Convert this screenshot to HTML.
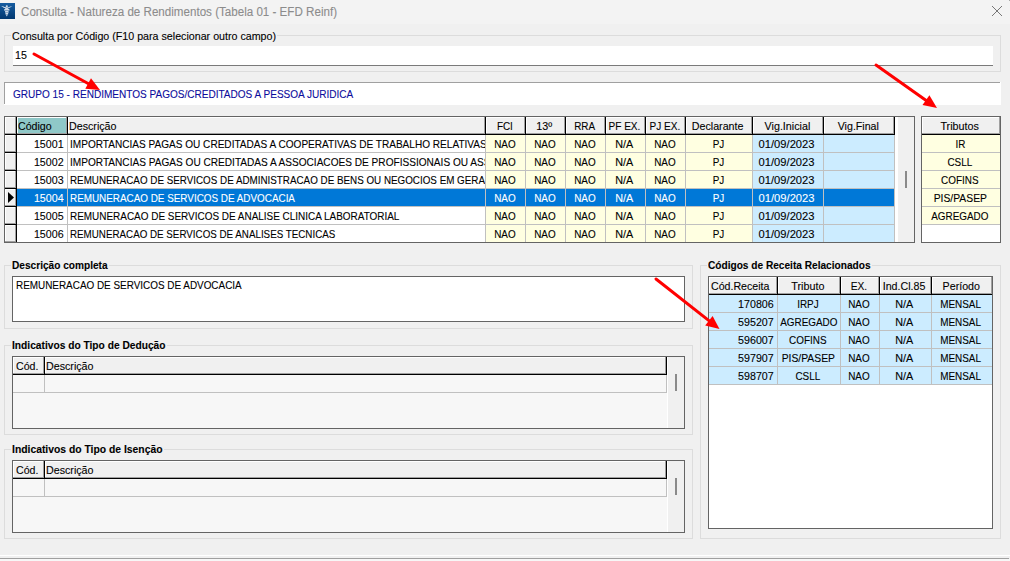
<!DOCTYPE html><html><head><meta charset="utf-8"><style>
html,body{margin:0;padding:0;width:1010px;height:561px;overflow:hidden;background:#f0f0f0}
body{position:relative;font-family:"Liberation Sans",sans-serif;font-size:11px}
div{position:absolute;box-sizing:border-box}
.t{line-height:14px;height:14px;white-space:nowrap;overflow:hidden}
.t span{display:inline-block;-webkit-text-stroke:0.1px currentColor}
</style></head><body>
<div style="left:0px;top:0px;width:1010px;height:561px;background:#f0f0f0;"></div>
<div style="left:0px;top:0px;width:1010px;height:24px;background:#f3f3f3;"></div>
<svg style="position:absolute;left:0;top:3px" width="15" height="16" viewBox="0 0 15 16">
<defs><linearGradient id="ig" x1="0" y1="0" x2="0" y2="1"><stop offset="0" stop-color="#165ca0"/><stop offset="1" stop-color="#023870"/></linearGradient></defs>
<rect width="15" height="16" fill="url(#ig)"/>
<g fill="#cfdbe8">
<circle cx="6.8" cy="3.3" r="1.1"/>
<path d="M1.2 3.0 L6 4.6 L6.2 5.6 L5.6 5.6 Z" />
<path d="M1.2 2.9 C3 3.4 4.8 3.9 6.3 4.7 L6.0 5.6 C4.3 5.0 2.6 4.0 1.2 2.9 Z"/>
<path d="M12.4 2.9 C10.6 3.4 8.8 3.9 7.3 4.7 L7.6 5.6 C9.3 5.0 11 4.0 12.4 2.9 Z"/>
<path d="M5.6 4.6 L8 4.6 L8.2 5.8 L9.6 6.4 L9.4 7.6 L8.4 7.9 L8.6 9.0 L8.2 10.6 L7.6 12 L6.8 13.6 L6.0 12 L5.4 10.6 L5.0 9.0 L5.2 7.9 L4.2 7.6 L4.0 6.4 L5.4 5.8 Z"/>
</g>
<g fill="#5f86b0"><rect x="4.6" y="7.2" width="4.4" height="0.7"/><rect x="5.0" y="9.2" width="3.6" height="0.6"/><rect x="5.4" y="11" width="2.8" height="0.6"/></g>
</svg>
<div class="t" style="left:21px;top:4.84px;width:380px;text-align:left;color:#8c8c8c;font-size:12px;"><span style="transform:scaleX(0.9669);transform-origin:0 0">Consulta - Natureza de Rendimentos (Tabela 01 - EFD Reinf)</span></div>
<div style="left:1009px;top:0px;width:1px;height:1px;background:#a8a8a8;"></div>
<svg style="position:absolute;left:991px;top:5px" width="12" height="12" viewBox="0 0 12 12"><path d="M1 1 L11 11 M11 1 L1 11" stroke="#777777" stroke-width="1"/></svg>
<div style="left:4px;top:35px;width:997px;height:1px;background:#dcdcdc;"></div>
<div style="left:4px;top:71px;width:997px;height:1px;background:#dcdcdc;"></div>
<div style="left:4px;top:35px;width:1px;height:37px;background:#dcdcdc;"></div>
<div style="left:1000px;top:35px;width:1px;height:37px;background:#dcdcdc;"></div>
<div style="left:11px;top:28px;width:266px;height:12px;background:#f0f0f0;"></div>
<div class="t" style="left:12px;top:29.19px;width:389px;text-align:left;color:#000;font-size:11px;"><span style="transform:scaleX(0.9703);transform-origin:0 0">Consulta por Código (F10 para selecionar outro campo)</span></div>
<div style="left:13px;top:46px;width:980px;height:19px;background:#ffffff;"></div>
<div style="left:13px;top:65px;width:980px;height:1px;background:#7a7a7a;"></div>
<div class="t" style="left:15px;top:48.19px;width:86px;text-align:left;color:#000;font-size:11px;"><span style="transform:scaleX(0.9700);transform-origin:0 0">15</span></div>
<div style="left:4px;top:82px;width:997px;height:23px;background:#ffffff;"></div>
<div style="left:4px;top:82px;width:996px;height:1px;background:#a0a0a0;"></div>
<div style="left:4px;top:82px;width:1px;height:22px;background:#a0a0a0;"></div>
<div class="t" style="left:13px;top:87.19px;width:588px;text-align:left;color:#0c0c9c;font-size:11px;"><span style="transform:scaleX(0.9127);transform-origin:0 0">GRUPO 15 - RENDIMENTOS PAGOS/CREDITADOS A PESSOA JURIDICA</span></div>
<div style="left:4px;top:116px;width:911px;height:127px;background:#f0f0f0;"></div>
<div style="left:5px;top:117px;width:11px;height:17px;background:#f0f0f0;"></div>
<div style="left:5px;top:117px;width:11px;height:1px;background:#ffffff;"></div>
<div style="left:5px;top:117px;width:1px;height:17px;background:#ffffff;"></div>
<div style="left:5px;top:133px;width:11px;height:1px;background:#a0a0a0;"></div>
<div style="left:15px;top:117px;width:1px;height:17px;background:#a0a0a0;"></div>
<div style="left:16px;top:117px;width:1px;height:18px;background:#000000;"></div>
<div style="left:5px;top:134px;width:12px;height:1px;background:#000000;"></div>
<div style="left:17px;top:117px;width:50px;height:17px;background:#f0f0f0;"></div>
<div style="left:17px;top:117px;width:50px;height:1px;background:#ffffff;"></div>
<div style="left:17px;top:117px;width:1px;height:17px;background:#ffffff;"></div>
<div style="left:17px;top:133px;width:50px;height:1px;background:#a0a0a0;"></div>
<div style="left:66px;top:117px;width:1px;height:17px;background:#a0a0a0;"></div>
<div style="left:18px;top:118px;width:48px;height:15px;background:#8fc8c8;"></div>
<div style="left:67px;top:117px;width:1px;height:18px;background:#000000;"></div>
<div style="left:17px;top:134px;width:51px;height:1px;background:#000000;"></div>
<div style="left:68px;top:117px;width:417px;height:17px;background:#f0f0f0;"></div>
<div style="left:68px;top:117px;width:417px;height:1px;background:#ffffff;"></div>
<div style="left:68px;top:117px;width:1px;height:17px;background:#ffffff;"></div>
<div style="left:68px;top:133px;width:417px;height:1px;background:#a0a0a0;"></div>
<div style="left:484px;top:117px;width:1px;height:17px;background:#a0a0a0;"></div>
<div style="left:485px;top:117px;width:1px;height:18px;background:#000000;"></div>
<div style="left:68px;top:134px;width:418px;height:1px;background:#000000;"></div>
<div style="left:486px;top:117px;width:39px;height:17px;background:#f0f0f0;"></div>
<div style="left:486px;top:117px;width:39px;height:1px;background:#ffffff;"></div>
<div style="left:486px;top:117px;width:1px;height:17px;background:#ffffff;"></div>
<div style="left:486px;top:133px;width:39px;height:1px;background:#a0a0a0;"></div>
<div style="left:524px;top:117px;width:1px;height:17px;background:#a0a0a0;"></div>
<div style="left:525px;top:117px;width:1px;height:18px;background:#000000;"></div>
<div style="left:486px;top:134px;width:40px;height:1px;background:#000000;"></div>
<div style="left:526px;top:117px;width:39px;height:17px;background:#f0f0f0;"></div>
<div style="left:526px;top:117px;width:39px;height:1px;background:#ffffff;"></div>
<div style="left:526px;top:117px;width:1px;height:17px;background:#ffffff;"></div>
<div style="left:526px;top:133px;width:39px;height:1px;background:#a0a0a0;"></div>
<div style="left:564px;top:117px;width:1px;height:17px;background:#a0a0a0;"></div>
<div style="left:565px;top:117px;width:1px;height:18px;background:#000000;"></div>
<div style="left:526px;top:134px;width:40px;height:1px;background:#000000;"></div>
<div style="left:566px;top:117px;width:39px;height:17px;background:#f0f0f0;"></div>
<div style="left:566px;top:117px;width:39px;height:1px;background:#ffffff;"></div>
<div style="left:566px;top:117px;width:1px;height:17px;background:#ffffff;"></div>
<div style="left:566px;top:133px;width:39px;height:1px;background:#a0a0a0;"></div>
<div style="left:604px;top:117px;width:1px;height:17px;background:#a0a0a0;"></div>
<div style="left:605px;top:117px;width:1px;height:18px;background:#000000;"></div>
<div style="left:566px;top:134px;width:40px;height:1px;background:#000000;"></div>
<div style="left:606px;top:117px;width:39px;height:17px;background:#f0f0f0;"></div>
<div style="left:606px;top:117px;width:39px;height:1px;background:#ffffff;"></div>
<div style="left:606px;top:117px;width:1px;height:17px;background:#ffffff;"></div>
<div style="left:606px;top:133px;width:39px;height:1px;background:#a0a0a0;"></div>
<div style="left:644px;top:117px;width:1px;height:17px;background:#a0a0a0;"></div>
<div style="left:645px;top:117px;width:1px;height:18px;background:#000000;"></div>
<div style="left:606px;top:134px;width:40px;height:1px;background:#000000;"></div>
<div style="left:646px;top:117px;width:39px;height:17px;background:#f0f0f0;"></div>
<div style="left:646px;top:117px;width:39px;height:1px;background:#ffffff;"></div>
<div style="left:646px;top:117px;width:1px;height:17px;background:#ffffff;"></div>
<div style="left:646px;top:133px;width:39px;height:1px;background:#a0a0a0;"></div>
<div style="left:684px;top:117px;width:1px;height:17px;background:#a0a0a0;"></div>
<div style="left:685px;top:117px;width:1px;height:18px;background:#000000;"></div>
<div style="left:646px;top:134px;width:40px;height:1px;background:#000000;"></div>
<div style="left:686px;top:117px;width:66px;height:17px;background:#f0f0f0;"></div>
<div style="left:686px;top:117px;width:66px;height:1px;background:#ffffff;"></div>
<div style="left:686px;top:117px;width:1px;height:17px;background:#ffffff;"></div>
<div style="left:686px;top:133px;width:66px;height:1px;background:#a0a0a0;"></div>
<div style="left:751px;top:117px;width:1px;height:17px;background:#a0a0a0;"></div>
<div style="left:752px;top:117px;width:1px;height:18px;background:#000000;"></div>
<div style="left:686px;top:134px;width:67px;height:1px;background:#000000;"></div>
<div style="left:753px;top:117px;width:70px;height:17px;background:#f0f0f0;"></div>
<div style="left:753px;top:117px;width:70px;height:1px;background:#ffffff;"></div>
<div style="left:753px;top:117px;width:1px;height:17px;background:#ffffff;"></div>
<div style="left:753px;top:133px;width:70px;height:1px;background:#a0a0a0;"></div>
<div style="left:822px;top:117px;width:1px;height:17px;background:#a0a0a0;"></div>
<div style="left:823px;top:117px;width:1px;height:18px;background:#000000;"></div>
<div style="left:753px;top:134px;width:71px;height:1px;background:#000000;"></div>
<div style="left:824px;top:117px;width:70px;height:17px;background:#f0f0f0;"></div>
<div style="left:824px;top:117px;width:70px;height:1px;background:#ffffff;"></div>
<div style="left:824px;top:117px;width:1px;height:17px;background:#ffffff;"></div>
<div style="left:824px;top:133px;width:70px;height:1px;background:#a0a0a0;"></div>
<div style="left:893px;top:117px;width:1px;height:17px;background:#a0a0a0;"></div>
<div style="left:894px;top:117px;width:1px;height:18px;background:#000000;"></div>
<div style="left:824px;top:134px;width:71px;height:1px;background:#000000;"></div>
<div style="left:5px;top:135px;width:11px;height:17px;background:#f0f0f0;"></div>
<div style="left:5px;top:135px;width:11px;height:1px;background:#ffffff;"></div>
<div style="left:5px;top:135px;width:1px;height:17px;background:#ffffff;"></div>
<div style="left:5px;top:151px;width:11px;height:1px;background:#a0a0a0;"></div>
<div style="left:15px;top:135px;width:1px;height:17px;background:#a0a0a0;"></div>
<div style="left:16px;top:135px;width:1px;height:18px;background:#000000;"></div>
<div style="left:5px;top:152px;width:12px;height:1px;background:#000000;"></div>
<div style="left:17px;top:135px;width:50px;height:17px;background:#ffffff;"></div>
<div style="left:67px;top:135px;width:1px;height:18px;background:#c0c0c0;"></div>
<div style="left:17px;top:152px;width:51px;height:1px;background:#c0c0c0;"></div>
<div style="left:68px;top:135px;width:417px;height:17px;background:#ffffff;"></div>
<div style="left:485px;top:135px;width:1px;height:18px;background:#c0c0c0;"></div>
<div style="left:68px;top:152px;width:418px;height:1px;background:#c0c0c0;"></div>
<div style="left:486px;top:135px;width:39px;height:17px;background:#ffffe1;"></div>
<div style="left:525px;top:135px;width:1px;height:18px;background:#c0c0c0;"></div>
<div style="left:486px;top:152px;width:40px;height:1px;background:#c0c0c0;"></div>
<div style="left:526px;top:135px;width:39px;height:17px;background:#ffffe1;"></div>
<div style="left:565px;top:135px;width:1px;height:18px;background:#c0c0c0;"></div>
<div style="left:526px;top:152px;width:40px;height:1px;background:#c0c0c0;"></div>
<div style="left:566px;top:135px;width:39px;height:17px;background:#ffffe1;"></div>
<div style="left:605px;top:135px;width:1px;height:18px;background:#c0c0c0;"></div>
<div style="left:566px;top:152px;width:40px;height:1px;background:#c0c0c0;"></div>
<div style="left:606px;top:135px;width:39px;height:17px;background:#ffffe1;"></div>
<div style="left:645px;top:135px;width:1px;height:18px;background:#c0c0c0;"></div>
<div style="left:606px;top:152px;width:40px;height:1px;background:#c0c0c0;"></div>
<div style="left:646px;top:135px;width:39px;height:17px;background:#ffffe1;"></div>
<div style="left:685px;top:135px;width:1px;height:18px;background:#c0c0c0;"></div>
<div style="left:646px;top:152px;width:40px;height:1px;background:#c0c0c0;"></div>
<div style="left:686px;top:135px;width:66px;height:17px;background:#ffffe1;"></div>
<div style="left:752px;top:135px;width:1px;height:18px;background:#c0c0c0;"></div>
<div style="left:686px;top:152px;width:67px;height:1px;background:#c0c0c0;"></div>
<div style="left:753px;top:135px;width:70px;height:17px;background:#ccecff;"></div>
<div style="left:823px;top:135px;width:1px;height:18px;background:#c0c0c0;"></div>
<div style="left:753px;top:152px;width:71px;height:1px;background:#c0c0c0;"></div>
<div style="left:824px;top:135px;width:70px;height:17px;background:#ccecff;"></div>
<div style="left:894px;top:135px;width:1px;height:18px;background:#c0c0c0;"></div>
<div style="left:824px;top:152px;width:71px;height:1px;background:#c0c0c0;"></div>
<div style="left:5px;top:153px;width:11px;height:17px;background:#f0f0f0;"></div>
<div style="left:5px;top:153px;width:11px;height:1px;background:#ffffff;"></div>
<div style="left:5px;top:153px;width:1px;height:17px;background:#ffffff;"></div>
<div style="left:5px;top:169px;width:11px;height:1px;background:#a0a0a0;"></div>
<div style="left:15px;top:153px;width:1px;height:17px;background:#a0a0a0;"></div>
<div style="left:16px;top:153px;width:1px;height:18px;background:#000000;"></div>
<div style="left:5px;top:170px;width:12px;height:1px;background:#000000;"></div>
<div style="left:17px;top:153px;width:50px;height:17px;background:#ffffff;"></div>
<div style="left:67px;top:153px;width:1px;height:18px;background:#c0c0c0;"></div>
<div style="left:17px;top:170px;width:51px;height:1px;background:#c0c0c0;"></div>
<div style="left:68px;top:153px;width:417px;height:17px;background:#ffffff;"></div>
<div style="left:485px;top:153px;width:1px;height:18px;background:#c0c0c0;"></div>
<div style="left:68px;top:170px;width:418px;height:1px;background:#c0c0c0;"></div>
<div style="left:486px;top:153px;width:39px;height:17px;background:#ffffe1;"></div>
<div style="left:525px;top:153px;width:1px;height:18px;background:#c0c0c0;"></div>
<div style="left:486px;top:170px;width:40px;height:1px;background:#c0c0c0;"></div>
<div style="left:526px;top:153px;width:39px;height:17px;background:#ffffe1;"></div>
<div style="left:565px;top:153px;width:1px;height:18px;background:#c0c0c0;"></div>
<div style="left:526px;top:170px;width:40px;height:1px;background:#c0c0c0;"></div>
<div style="left:566px;top:153px;width:39px;height:17px;background:#ffffe1;"></div>
<div style="left:605px;top:153px;width:1px;height:18px;background:#c0c0c0;"></div>
<div style="left:566px;top:170px;width:40px;height:1px;background:#c0c0c0;"></div>
<div style="left:606px;top:153px;width:39px;height:17px;background:#ffffe1;"></div>
<div style="left:645px;top:153px;width:1px;height:18px;background:#c0c0c0;"></div>
<div style="left:606px;top:170px;width:40px;height:1px;background:#c0c0c0;"></div>
<div style="left:646px;top:153px;width:39px;height:17px;background:#ffffe1;"></div>
<div style="left:685px;top:153px;width:1px;height:18px;background:#c0c0c0;"></div>
<div style="left:646px;top:170px;width:40px;height:1px;background:#c0c0c0;"></div>
<div style="left:686px;top:153px;width:66px;height:17px;background:#ffffe1;"></div>
<div style="left:752px;top:153px;width:1px;height:18px;background:#c0c0c0;"></div>
<div style="left:686px;top:170px;width:67px;height:1px;background:#c0c0c0;"></div>
<div style="left:753px;top:153px;width:70px;height:17px;background:#ccecff;"></div>
<div style="left:823px;top:153px;width:1px;height:18px;background:#c0c0c0;"></div>
<div style="left:753px;top:170px;width:71px;height:1px;background:#c0c0c0;"></div>
<div style="left:824px;top:153px;width:70px;height:17px;background:#ccecff;"></div>
<div style="left:894px;top:153px;width:1px;height:18px;background:#c0c0c0;"></div>
<div style="left:824px;top:170px;width:71px;height:1px;background:#c0c0c0;"></div>
<div style="left:5px;top:171px;width:11px;height:17px;background:#f0f0f0;"></div>
<div style="left:5px;top:171px;width:11px;height:1px;background:#ffffff;"></div>
<div style="left:5px;top:171px;width:1px;height:17px;background:#ffffff;"></div>
<div style="left:5px;top:187px;width:11px;height:1px;background:#a0a0a0;"></div>
<div style="left:15px;top:171px;width:1px;height:17px;background:#a0a0a0;"></div>
<div style="left:16px;top:171px;width:1px;height:18px;background:#000000;"></div>
<div style="left:5px;top:188px;width:12px;height:1px;background:#000000;"></div>
<div style="left:17px;top:171px;width:50px;height:17px;background:#ffffff;"></div>
<div style="left:67px;top:171px;width:1px;height:18px;background:#c0c0c0;"></div>
<div style="left:17px;top:188px;width:51px;height:1px;background:#c0c0c0;"></div>
<div style="left:68px;top:171px;width:417px;height:17px;background:#ffffff;"></div>
<div style="left:485px;top:171px;width:1px;height:18px;background:#c0c0c0;"></div>
<div style="left:68px;top:188px;width:418px;height:1px;background:#c0c0c0;"></div>
<div style="left:486px;top:171px;width:39px;height:17px;background:#ffffe1;"></div>
<div style="left:525px;top:171px;width:1px;height:18px;background:#c0c0c0;"></div>
<div style="left:486px;top:188px;width:40px;height:1px;background:#c0c0c0;"></div>
<div style="left:526px;top:171px;width:39px;height:17px;background:#ffffe1;"></div>
<div style="left:565px;top:171px;width:1px;height:18px;background:#c0c0c0;"></div>
<div style="left:526px;top:188px;width:40px;height:1px;background:#c0c0c0;"></div>
<div style="left:566px;top:171px;width:39px;height:17px;background:#ffffe1;"></div>
<div style="left:605px;top:171px;width:1px;height:18px;background:#c0c0c0;"></div>
<div style="left:566px;top:188px;width:40px;height:1px;background:#c0c0c0;"></div>
<div style="left:606px;top:171px;width:39px;height:17px;background:#ffffe1;"></div>
<div style="left:645px;top:171px;width:1px;height:18px;background:#c0c0c0;"></div>
<div style="left:606px;top:188px;width:40px;height:1px;background:#c0c0c0;"></div>
<div style="left:646px;top:171px;width:39px;height:17px;background:#ffffe1;"></div>
<div style="left:685px;top:171px;width:1px;height:18px;background:#c0c0c0;"></div>
<div style="left:646px;top:188px;width:40px;height:1px;background:#c0c0c0;"></div>
<div style="left:686px;top:171px;width:66px;height:17px;background:#ffffe1;"></div>
<div style="left:752px;top:171px;width:1px;height:18px;background:#c0c0c0;"></div>
<div style="left:686px;top:188px;width:67px;height:1px;background:#c0c0c0;"></div>
<div style="left:753px;top:171px;width:70px;height:17px;background:#ccecff;"></div>
<div style="left:823px;top:171px;width:1px;height:18px;background:#c0c0c0;"></div>
<div style="left:753px;top:188px;width:71px;height:1px;background:#c0c0c0;"></div>
<div style="left:824px;top:171px;width:70px;height:17px;background:#ccecff;"></div>
<div style="left:894px;top:171px;width:1px;height:18px;background:#c0c0c0;"></div>
<div style="left:824px;top:188px;width:71px;height:1px;background:#c0c0c0;"></div>
<div style="left:5px;top:189px;width:11px;height:17px;background:#f0f0f0;"></div>
<div style="left:5px;top:189px;width:11px;height:1px;background:#ffffff;"></div>
<div style="left:5px;top:189px;width:1px;height:17px;background:#ffffff;"></div>
<div style="left:5px;top:205px;width:11px;height:1px;background:#a0a0a0;"></div>
<div style="left:15px;top:189px;width:1px;height:17px;background:#a0a0a0;"></div>
<div style="left:16px;top:189px;width:1px;height:18px;background:#000000;"></div>
<div style="left:5px;top:206px;width:12px;height:1px;background:#000000;"></div>
<div style="left:17px;top:189px;width:50px;height:17px;background:#0078d7;"></div>
<div style="left:67px;top:189px;width:1px;height:18px;background:#c0c0c0;"></div>
<div style="left:17px;top:206px;width:51px;height:1px;background:#c0c0c0;"></div>
<div style="left:68px;top:189px;width:417px;height:17px;background:#0078d7;"></div>
<div style="left:485px;top:189px;width:1px;height:18px;background:#c0c0c0;"></div>
<div style="left:68px;top:206px;width:418px;height:1px;background:#c0c0c0;"></div>
<div style="left:486px;top:189px;width:39px;height:17px;background:#0078d7;"></div>
<div style="left:525px;top:189px;width:1px;height:18px;background:#c0c0c0;"></div>
<div style="left:486px;top:206px;width:40px;height:1px;background:#c0c0c0;"></div>
<div style="left:526px;top:189px;width:39px;height:17px;background:#0078d7;"></div>
<div style="left:565px;top:189px;width:1px;height:18px;background:#c0c0c0;"></div>
<div style="left:526px;top:206px;width:40px;height:1px;background:#c0c0c0;"></div>
<div style="left:566px;top:189px;width:39px;height:17px;background:#0078d7;"></div>
<div style="left:605px;top:189px;width:1px;height:18px;background:#c0c0c0;"></div>
<div style="left:566px;top:206px;width:40px;height:1px;background:#c0c0c0;"></div>
<div style="left:606px;top:189px;width:39px;height:17px;background:#0078d7;"></div>
<div style="left:645px;top:189px;width:1px;height:18px;background:#c0c0c0;"></div>
<div style="left:606px;top:206px;width:40px;height:1px;background:#c0c0c0;"></div>
<div style="left:646px;top:189px;width:39px;height:17px;background:#0078d7;"></div>
<div style="left:685px;top:189px;width:1px;height:18px;background:#c0c0c0;"></div>
<div style="left:646px;top:206px;width:40px;height:1px;background:#c0c0c0;"></div>
<div style="left:686px;top:189px;width:66px;height:17px;background:#0078d7;"></div>
<div style="left:752px;top:189px;width:1px;height:18px;background:#c0c0c0;"></div>
<div style="left:686px;top:206px;width:67px;height:1px;background:#c0c0c0;"></div>
<div style="left:753px;top:189px;width:70px;height:17px;background:#0078d7;"></div>
<div style="left:823px;top:189px;width:1px;height:18px;background:#c0c0c0;"></div>
<div style="left:753px;top:206px;width:71px;height:1px;background:#c0c0c0;"></div>
<div style="left:824px;top:189px;width:70px;height:17px;background:#0078d7;"></div>
<div style="left:894px;top:189px;width:1px;height:18px;background:#c0c0c0;"></div>
<div style="left:824px;top:206px;width:71px;height:1px;background:#c0c0c0;"></div>
<div style="left:5px;top:207px;width:11px;height:17px;background:#f0f0f0;"></div>
<div style="left:5px;top:207px;width:11px;height:1px;background:#ffffff;"></div>
<div style="left:5px;top:207px;width:1px;height:17px;background:#ffffff;"></div>
<div style="left:5px;top:223px;width:11px;height:1px;background:#a0a0a0;"></div>
<div style="left:15px;top:207px;width:1px;height:17px;background:#a0a0a0;"></div>
<div style="left:16px;top:207px;width:1px;height:18px;background:#000000;"></div>
<div style="left:5px;top:224px;width:12px;height:1px;background:#000000;"></div>
<div style="left:17px;top:207px;width:50px;height:17px;background:#ffffff;"></div>
<div style="left:67px;top:207px;width:1px;height:18px;background:#c0c0c0;"></div>
<div style="left:17px;top:224px;width:51px;height:1px;background:#c0c0c0;"></div>
<div style="left:68px;top:207px;width:417px;height:17px;background:#ffffff;"></div>
<div style="left:485px;top:207px;width:1px;height:18px;background:#c0c0c0;"></div>
<div style="left:68px;top:224px;width:418px;height:1px;background:#c0c0c0;"></div>
<div style="left:486px;top:207px;width:39px;height:17px;background:#ffffe1;"></div>
<div style="left:525px;top:207px;width:1px;height:18px;background:#c0c0c0;"></div>
<div style="left:486px;top:224px;width:40px;height:1px;background:#c0c0c0;"></div>
<div style="left:526px;top:207px;width:39px;height:17px;background:#ffffe1;"></div>
<div style="left:565px;top:207px;width:1px;height:18px;background:#c0c0c0;"></div>
<div style="left:526px;top:224px;width:40px;height:1px;background:#c0c0c0;"></div>
<div style="left:566px;top:207px;width:39px;height:17px;background:#ffffe1;"></div>
<div style="left:605px;top:207px;width:1px;height:18px;background:#c0c0c0;"></div>
<div style="left:566px;top:224px;width:40px;height:1px;background:#c0c0c0;"></div>
<div style="left:606px;top:207px;width:39px;height:17px;background:#ffffe1;"></div>
<div style="left:645px;top:207px;width:1px;height:18px;background:#c0c0c0;"></div>
<div style="left:606px;top:224px;width:40px;height:1px;background:#c0c0c0;"></div>
<div style="left:646px;top:207px;width:39px;height:17px;background:#ffffe1;"></div>
<div style="left:685px;top:207px;width:1px;height:18px;background:#c0c0c0;"></div>
<div style="left:646px;top:224px;width:40px;height:1px;background:#c0c0c0;"></div>
<div style="left:686px;top:207px;width:66px;height:17px;background:#ffffe1;"></div>
<div style="left:752px;top:207px;width:1px;height:18px;background:#c0c0c0;"></div>
<div style="left:686px;top:224px;width:67px;height:1px;background:#c0c0c0;"></div>
<div style="left:753px;top:207px;width:70px;height:17px;background:#ccecff;"></div>
<div style="left:823px;top:207px;width:1px;height:18px;background:#c0c0c0;"></div>
<div style="left:753px;top:224px;width:71px;height:1px;background:#c0c0c0;"></div>
<div style="left:824px;top:207px;width:70px;height:17px;background:#ccecff;"></div>
<div style="left:894px;top:207px;width:1px;height:18px;background:#c0c0c0;"></div>
<div style="left:824px;top:224px;width:71px;height:1px;background:#c0c0c0;"></div>
<div style="left:5px;top:225px;width:11px;height:17px;background:#f0f0f0;"></div>
<div style="left:5px;top:225px;width:11px;height:1px;background:#ffffff;"></div>
<div style="left:5px;top:225px;width:1px;height:17px;background:#ffffff;"></div>
<div style="left:5px;top:241px;width:11px;height:1px;background:#a0a0a0;"></div>
<div style="left:15px;top:225px;width:1px;height:17px;background:#a0a0a0;"></div>
<div style="left:16px;top:225px;width:1px;height:18px;background:#000000;"></div>
<div style="left:5px;top:242px;width:12px;height:1px;background:#000000;"></div>
<div style="left:17px;top:225px;width:50px;height:17px;background:#ffffff;"></div>
<div style="left:67px;top:225px;width:1px;height:18px;background:#c0c0c0;"></div>
<div style="left:17px;top:242px;width:51px;height:1px;background:#c0c0c0;"></div>
<div style="left:68px;top:225px;width:417px;height:17px;background:#ffffff;"></div>
<div style="left:485px;top:225px;width:1px;height:18px;background:#c0c0c0;"></div>
<div style="left:68px;top:242px;width:418px;height:1px;background:#c0c0c0;"></div>
<div style="left:486px;top:225px;width:39px;height:17px;background:#ffffe1;"></div>
<div style="left:525px;top:225px;width:1px;height:18px;background:#c0c0c0;"></div>
<div style="left:486px;top:242px;width:40px;height:1px;background:#c0c0c0;"></div>
<div style="left:526px;top:225px;width:39px;height:17px;background:#ffffe1;"></div>
<div style="left:565px;top:225px;width:1px;height:18px;background:#c0c0c0;"></div>
<div style="left:526px;top:242px;width:40px;height:1px;background:#c0c0c0;"></div>
<div style="left:566px;top:225px;width:39px;height:17px;background:#ffffe1;"></div>
<div style="left:605px;top:225px;width:1px;height:18px;background:#c0c0c0;"></div>
<div style="left:566px;top:242px;width:40px;height:1px;background:#c0c0c0;"></div>
<div style="left:606px;top:225px;width:39px;height:17px;background:#ffffe1;"></div>
<div style="left:645px;top:225px;width:1px;height:18px;background:#c0c0c0;"></div>
<div style="left:606px;top:242px;width:40px;height:1px;background:#c0c0c0;"></div>
<div style="left:646px;top:225px;width:39px;height:17px;background:#ffffe1;"></div>
<div style="left:685px;top:225px;width:1px;height:18px;background:#c0c0c0;"></div>
<div style="left:646px;top:242px;width:40px;height:1px;background:#c0c0c0;"></div>
<div style="left:686px;top:225px;width:66px;height:17px;background:#ffffe1;"></div>
<div style="left:752px;top:225px;width:1px;height:18px;background:#c0c0c0;"></div>
<div style="left:686px;top:242px;width:67px;height:1px;background:#c0c0c0;"></div>
<div style="left:753px;top:225px;width:70px;height:17px;background:#ccecff;"></div>
<div style="left:823px;top:225px;width:1px;height:18px;background:#c0c0c0;"></div>
<div style="left:753px;top:242px;width:71px;height:1px;background:#c0c0c0;"></div>
<div style="left:824px;top:225px;width:70px;height:17px;background:#ccecff;"></div>
<div style="left:894px;top:225px;width:1px;height:18px;background:#c0c0c0;"></div>
<div style="left:824px;top:242px;width:71px;height:1px;background:#c0c0c0;"></div>
<div style="left:4px;top:116px;width:911px;height:1px;background:#646464;"></div>
<div style="left:4px;top:242px;width:911px;height:1px;background:#646464;"></div>
<div style="left:4px;top:116px;width:1px;height:127px;background:#646464;"></div>
<div style="left:914px;top:116px;width:1px;height:127px;background:#646464;"></div>
<div style="left:895px;top:117px;width:19px;height:125px;background:#f0f0f0;"></div>
<div style="left:895px;top:117px;width:3px;height:125px;background:#ffffff;"></div>
<div style="left:905px;top:171px;width:2px;height:17px;background:#8a8a8a;"></div>
<div class="t" style="left:18px;top:119.19px;width:49px;text-align:left;color:#000;font-size:11px;"><span style="transform:scaleX(0.9656);transform-origin:0 0">Código</span></div>
<div class="t" style="left:69px;top:119.19px;width:416px;text-align:left;color:#000;font-size:11px;"><span style="transform:scaleX(0.9712);transform-origin:0 0">Descrição</span></div>
<div class="t" style="left:485px;top:119.19px;width:39px;text-align:center;color:#000;font-size:11px;"><span style="transform:scaleX(0.9000);transform-origin:50% 0">FCI</span></div>
<div class="t" style="left:525px;top:119.19px;width:39px;text-align:center;color:#000;font-size:11px;"><span style="transform:scaleX(0.9737);transform-origin:50% 0">13º</span></div>
<div class="t" style="left:565px;top:119.19px;width:39px;text-align:center;color:#000;font-size:11px;"><span style="transform:scaleX(0.9000);transform-origin:50% 0">RRA</span></div>
<div class="t" style="left:605px;top:119.19px;width:39px;text-align:center;color:#000;font-size:11px;"><span style="transform:scaleX(0.9140);transform-origin:50% 0">PF EX.</span></div>
<div class="t" style="left:645px;top:119.19px;width:39px;text-align:center;color:#000;font-size:11px;"><span style="transform:scaleX(0.9145);transform-origin:50% 0">PJ EX.</span></div>
<div class="t" style="left:685px;top:119.19px;width:66px;text-align:center;color:#000;font-size:11px;"><span style="transform:scaleX(0.9723);transform-origin:50% 0">Declarante</span></div>
<div class="t" style="left:752px;top:119.19px;width:70px;text-align:center;color:#000;font-size:11px;"><span style="transform:scaleX(0.9746);transform-origin:50% 0">Vig.Inicial</span></div>
<div class="t" style="left:823px;top:119.19px;width:70px;text-align:center;color:#000;font-size:11px;"><span style="transform:scaleX(0.9662);transform-origin:50% 0">Vig.Final</span></div>
<div class="t" style="left:17px;top:137.19px;width:50px;text-align:right;color:#000000;font-size:11px;padding-right:3px;box-sizing:border-box;"><span style="transform:scaleX(0.9700);transform-origin:100% 0">15001</span></div>
<div class="t" style="left:68px;top:137.19px;width:417px;text-align:left;color:#000000;font-size:11px;padding-left:2px;box-sizing:border-box;"><span style="transform:scaleX(0.9151);transform-origin:0 0">IMPORTANCIAS PAGAS OU CREDITADAS A COOPERATIVAS DE TRABALHO RELATIVAS A SERVICOS PESSOAIS</span></div>
<div class="t" style="left:485px;top:137.19px;width:39px;text-align:center;color:#000000;font-size:11px;"><span style="transform:scaleX(0.9000);transform-origin:50% 0">NAO</span></div>
<div class="t" style="left:525px;top:137.19px;width:39px;text-align:center;color:#000000;font-size:11px;"><span style="transform:scaleX(0.9000);transform-origin:50% 0">NAO</span></div>
<div class="t" style="left:565px;top:137.19px;width:39px;text-align:center;color:#000000;font-size:11px;"><span style="transform:scaleX(0.9000);transform-origin:50% 0">NAO</span></div>
<div class="t" style="left:605px;top:137.19px;width:39px;text-align:center;color:#000000;font-size:11px;"><span style="transform:scaleX(0.9817);transform-origin:50% 0">N/A</span></div>
<div class="t" style="left:645px;top:137.19px;width:39px;text-align:center;color:#000000;font-size:11px;"><span style="transform:scaleX(0.9000);transform-origin:50% 0">NAO</span></div>
<div class="t" style="left:685px;top:137.19px;width:66px;text-align:center;color:#000000;font-size:11px;"><span style="transform:scaleX(0.9000);transform-origin:50% 0">PJ</span></div>
<div class="t" style="left:752px;top:137.19px;width:70px;text-align:center;color:#000000;font-size:11px;"><span style="transform:scaleX(1.0166);transform-origin:50% 0">01/09/2023</span></div>
<div class="t" style="left:17px;top:155.19px;width:50px;text-align:right;color:#000000;font-size:11px;padding-right:3px;box-sizing:border-box;"><span style="transform:scaleX(0.9700);transform-origin:100% 0">15002</span></div>
<div class="t" style="left:68px;top:155.19px;width:417px;text-align:left;color:#000000;font-size:11px;padding-left:2px;box-sizing:border-box;"><span style="transform:scaleX(0.9177);transform-origin:0 0">IMPORTANCIAS PAGAS OU CREDITADAS A ASSOCIACOES DE PROFISSIONAIS OU ASSEMELHADAS</span></div>
<div class="t" style="left:485px;top:155.19px;width:39px;text-align:center;color:#000000;font-size:11px;"><span style="transform:scaleX(0.9000);transform-origin:50% 0">NAO</span></div>
<div class="t" style="left:525px;top:155.19px;width:39px;text-align:center;color:#000000;font-size:11px;"><span style="transform:scaleX(0.9000);transform-origin:50% 0">NAO</span></div>
<div class="t" style="left:565px;top:155.19px;width:39px;text-align:center;color:#000000;font-size:11px;"><span style="transform:scaleX(0.9000);transform-origin:50% 0">NAO</span></div>
<div class="t" style="left:605px;top:155.19px;width:39px;text-align:center;color:#000000;font-size:11px;"><span style="transform:scaleX(0.9817);transform-origin:50% 0">N/A</span></div>
<div class="t" style="left:645px;top:155.19px;width:39px;text-align:center;color:#000000;font-size:11px;"><span style="transform:scaleX(0.9000);transform-origin:50% 0">NAO</span></div>
<div class="t" style="left:685px;top:155.19px;width:66px;text-align:center;color:#000000;font-size:11px;"><span style="transform:scaleX(0.9000);transform-origin:50% 0">PJ</span></div>
<div class="t" style="left:752px;top:155.19px;width:70px;text-align:center;color:#000000;font-size:11px;"><span style="transform:scaleX(1.0166);transform-origin:50% 0">01/09/2023</span></div>
<div class="t" style="left:17px;top:173.19px;width:50px;text-align:right;color:#000000;font-size:11px;padding-right:3px;box-sizing:border-box;"><span style="transform:scaleX(0.9700);transform-origin:100% 0">15003</span></div>
<div class="t" style="left:68px;top:173.19px;width:417px;text-align:left;color:#000000;font-size:11px;padding-left:2px;box-sizing:border-box;"><span style="transform:scaleX(0.8937);transform-origin:0 0">REMUNERACAO DE SERVICOS DE ADMINISTRACAO DE BENS OU NEGOCIOS EM GERAL</span></div>
<div class="t" style="left:485px;top:173.19px;width:39px;text-align:center;color:#000000;font-size:11px;"><span style="transform:scaleX(0.9000);transform-origin:50% 0">NAO</span></div>
<div class="t" style="left:525px;top:173.19px;width:39px;text-align:center;color:#000000;font-size:11px;"><span style="transform:scaleX(0.9000);transform-origin:50% 0">NAO</span></div>
<div class="t" style="left:565px;top:173.19px;width:39px;text-align:center;color:#000000;font-size:11px;"><span style="transform:scaleX(0.9000);transform-origin:50% 0">NAO</span></div>
<div class="t" style="left:605px;top:173.19px;width:39px;text-align:center;color:#000000;font-size:11px;"><span style="transform:scaleX(0.9817);transform-origin:50% 0">N/A</span></div>
<div class="t" style="left:645px;top:173.19px;width:39px;text-align:center;color:#000000;font-size:11px;"><span style="transform:scaleX(0.9000);transform-origin:50% 0">NAO</span></div>
<div class="t" style="left:685px;top:173.19px;width:66px;text-align:center;color:#000000;font-size:11px;"><span style="transform:scaleX(0.9000);transform-origin:50% 0">PJ</span></div>
<div class="t" style="left:752px;top:173.19px;width:70px;text-align:center;color:#000000;font-size:11px;"><span style="transform:scaleX(1.0166);transform-origin:50% 0">01/09/2023</span></div>
<div class="t" style="left:17px;top:191.19px;width:50px;text-align:right;color:#ffffff;font-size:11px;padding-right:3px;box-sizing:border-box;"><span style="transform:scaleX(0.9700);transform-origin:100% 0">15004</span></div>
<div class="t" style="left:68px;top:191.19px;width:417px;text-align:left;color:#ffffff;font-size:11px;padding-left:2px;box-sizing:border-box;"><span style="transform:scaleX(0.8984);transform-origin:0 0">REMUNERACAO DE SERVICOS DE ADVOCACIA</span></div>
<div class="t" style="left:485px;top:191.19px;width:39px;text-align:center;color:#ffffff;font-size:11px;"><span style="transform:scaleX(0.9000);transform-origin:50% 0">NAO</span></div>
<div class="t" style="left:525px;top:191.19px;width:39px;text-align:center;color:#ffffff;font-size:11px;"><span style="transform:scaleX(0.9000);transform-origin:50% 0">NAO</span></div>
<div class="t" style="left:565px;top:191.19px;width:39px;text-align:center;color:#ffffff;font-size:11px;"><span style="transform:scaleX(0.9000);transform-origin:50% 0">NAO</span></div>
<div class="t" style="left:605px;top:191.19px;width:39px;text-align:center;color:#ffffff;font-size:11px;"><span style="transform:scaleX(0.9817);transform-origin:50% 0">N/A</span></div>
<div class="t" style="left:645px;top:191.19px;width:39px;text-align:center;color:#ffffff;font-size:11px;"><span style="transform:scaleX(0.9000);transform-origin:50% 0">NAO</span></div>
<div class="t" style="left:685px;top:191.19px;width:66px;text-align:center;color:#ffffff;font-size:11px;"><span style="transform:scaleX(0.9000);transform-origin:50% 0">PJ</span></div>
<div class="t" style="left:752px;top:191.19px;width:70px;text-align:center;color:#ffffff;font-size:11px;"><span style="transform:scaleX(1.0166);transform-origin:50% 0">01/09/2023</span></div>
<div class="t" style="left:17px;top:209.19px;width:50px;text-align:right;color:#000000;font-size:11px;padding-right:3px;box-sizing:border-box;"><span style="transform:scaleX(0.9700);transform-origin:100% 0">15005</span></div>
<div class="t" style="left:68px;top:209.19px;width:417px;text-align:left;color:#000000;font-size:11px;padding-left:2px;box-sizing:border-box;"><span style="transform:scaleX(0.9041);transform-origin:0 0">REMUNERACAO DE SERVICOS DE ANALISE CLINICA LABORATORIAL</span></div>
<div class="t" style="left:485px;top:209.19px;width:39px;text-align:center;color:#000000;font-size:11px;"><span style="transform:scaleX(0.9000);transform-origin:50% 0">NAO</span></div>
<div class="t" style="left:525px;top:209.19px;width:39px;text-align:center;color:#000000;font-size:11px;"><span style="transform:scaleX(0.9000);transform-origin:50% 0">NAO</span></div>
<div class="t" style="left:565px;top:209.19px;width:39px;text-align:center;color:#000000;font-size:11px;"><span style="transform:scaleX(0.9000);transform-origin:50% 0">NAO</span></div>
<div class="t" style="left:605px;top:209.19px;width:39px;text-align:center;color:#000000;font-size:11px;"><span style="transform:scaleX(0.9817);transform-origin:50% 0">N/A</span></div>
<div class="t" style="left:645px;top:209.19px;width:39px;text-align:center;color:#000000;font-size:11px;"><span style="transform:scaleX(0.9000);transform-origin:50% 0">NAO</span></div>
<div class="t" style="left:685px;top:209.19px;width:66px;text-align:center;color:#000000;font-size:11px;"><span style="transform:scaleX(0.9000);transform-origin:50% 0">PJ</span></div>
<div class="t" style="left:752px;top:209.19px;width:70px;text-align:center;color:#000000;font-size:11px;"><span style="transform:scaleX(1.0166);transform-origin:50% 0">01/09/2023</span></div>
<div class="t" style="left:17px;top:227.19px;width:50px;text-align:right;color:#000000;font-size:11px;padding-right:3px;box-sizing:border-box;"><span style="transform:scaleX(0.9700);transform-origin:100% 0">15006</span></div>
<div class="t" style="left:68px;top:227.19px;width:417px;text-align:left;color:#000000;font-size:11px;padding-left:2px;box-sizing:border-box;"><span style="transform:scaleX(0.8905);transform-origin:0 0">REMUNERACAO DE SERVICOS DE ANALISES TECNICAS</span></div>
<div class="t" style="left:485px;top:227.19px;width:39px;text-align:center;color:#000000;font-size:11px;"><span style="transform:scaleX(0.9000);transform-origin:50% 0">NAO</span></div>
<div class="t" style="left:525px;top:227.19px;width:39px;text-align:center;color:#000000;font-size:11px;"><span style="transform:scaleX(0.9000);transform-origin:50% 0">NAO</span></div>
<div class="t" style="left:565px;top:227.19px;width:39px;text-align:center;color:#000000;font-size:11px;"><span style="transform:scaleX(0.9000);transform-origin:50% 0">NAO</span></div>
<div class="t" style="left:605px;top:227.19px;width:39px;text-align:center;color:#000000;font-size:11px;"><span style="transform:scaleX(0.9817);transform-origin:50% 0">N/A</span></div>
<div class="t" style="left:645px;top:227.19px;width:39px;text-align:center;color:#000000;font-size:11px;"><span style="transform:scaleX(0.9000);transform-origin:50% 0">NAO</span></div>
<div class="t" style="left:685px;top:227.19px;width:66px;text-align:center;color:#000000;font-size:11px;"><span style="transform:scaleX(0.9000);transform-origin:50% 0">PJ</span></div>
<div class="t" style="left:752px;top:227.19px;width:70px;text-align:center;color:#000000;font-size:11px;"><span style="transform:scaleX(1.0166);transform-origin:50% 0">01/09/2023</span></div>
<svg style="position:absolute;left:8px;top:192px" width="7" height="12" viewBox="0 0 7 12"><path d="M0 0 L6 5.5 L0 11 Z" fill="#000"/></svg>
<div style="left:921px;top:116px;width:80px;height:127px;background:#ffffff;"></div>
<div style="left:921px;top:116px;width:80px;height:127px;background:#ffffff;"></div>
<div style="left:922px;top:117px;width:78px;height:17px;background:#f0f0f0;"></div>
<div style="left:922px;top:117px;width:78px;height:1px;background:#ffffff;"></div>
<div style="left:922px;top:117px;width:1px;height:17px;background:#ffffff;"></div>
<div style="left:922px;top:133px;width:78px;height:1px;background:#a0a0a0;"></div>
<div style="left:999px;top:117px;width:1px;height:17px;background:#a0a0a0;"></div>
<div style="left:1000px;top:117px;width:1px;height:18px;background:#000000;"></div>
<div style="left:922px;top:134px;width:79px;height:1px;background:#000000;"></div>
<div style="left:922px;top:135px;width:78px;height:17px;background:#ffffe1;"></div>
<div style="left:1000px;top:135px;width:1px;height:18px;background:#c0c0c0;"></div>
<div style="left:922px;top:152px;width:79px;height:1px;background:#c0c0c0;"></div>
<div style="left:922px;top:153px;width:78px;height:17px;background:#ffffe1;"></div>
<div style="left:1000px;top:153px;width:1px;height:18px;background:#c0c0c0;"></div>
<div style="left:922px;top:170px;width:79px;height:1px;background:#c0c0c0;"></div>
<div style="left:922px;top:171px;width:78px;height:17px;background:#ffffe1;"></div>
<div style="left:1000px;top:171px;width:1px;height:18px;background:#c0c0c0;"></div>
<div style="left:922px;top:188px;width:79px;height:1px;background:#c0c0c0;"></div>
<div style="left:922px;top:189px;width:78px;height:17px;background:#ffffe1;"></div>
<div style="left:1000px;top:189px;width:1px;height:18px;background:#c0c0c0;"></div>
<div style="left:922px;top:206px;width:79px;height:1px;background:#c0c0c0;"></div>
<div style="left:922px;top:207px;width:78px;height:17px;background:#ffffe1;"></div>
<div style="left:1000px;top:207px;width:1px;height:18px;background:#c0c0c0;"></div>
<div style="left:922px;top:224px;width:79px;height:1px;background:#c0c0c0;"></div>
<div style="left:921px;top:116px;width:80px;height:1px;background:#646464;"></div>
<div style="left:921px;top:242px;width:80px;height:1px;background:#646464;"></div>
<div style="left:921px;top:116px;width:1px;height:127px;background:#646464;"></div>
<div style="left:1000px;top:116px;width:1px;height:127px;background:#646464;"></div>
<div class="t" style="left:921px;top:119.19px;width:78px;text-align:center;color:#000;font-size:11px;"><span style="transform:scaleX(0.9807);transform-origin:50% 0">Tributos</span></div>
<div class="t" style="left:921px;top:137.19px;width:78px;text-align:center;color:#000;font-size:11px;"><span style="transform:scaleX(0.9000);transform-origin:50% 0">IR</span></div>
<div class="t" style="left:921px;top:155.19px;width:78px;text-align:center;color:#000;font-size:11px;"><span style="transform:scaleX(0.9000);transform-origin:50% 0">CSLL</span></div>
<div class="t" style="left:921px;top:173.19px;width:78px;text-align:center;color:#000;font-size:11px;"><span style="transform:scaleX(0.9000);transform-origin:50% 0">COFINS</span></div>
<div class="t" style="left:921px;top:191.19px;width:78px;text-align:center;color:#000;font-size:11px;"><span style="transform:scaleX(0.9394);transform-origin:50% 0">PIS/PASEP</span></div>
<div class="t" style="left:921px;top:209.19px;width:78px;text-align:center;color:#000;font-size:11px;"><span style="transform:scaleX(0.9000);transform-origin:50% 0">AGREGADO</span></div>
<div style="left:4px;top:265px;width:689px;height:1px;background:#dcdcdc;"></div>
<div style="left:4px;top:328px;width:689px;height:1px;background:#dcdcdc;"></div>
<div style="left:4px;top:265px;width:1px;height:64px;background:#dcdcdc;"></div>
<div style="left:692px;top:265px;width:1px;height:64px;background:#dcdcdc;"></div>
<div style="left:11px;top:258px;width:98px;height:12px;background:#f0f0f0;"></div>
<div class="t" style="left:12px;top:258.19px;width:289px;text-align:left;color:#000;font-size:11px;font-weight:bold;"><span style="transform:scaleX(0.9200);transform-origin:0 0">Descrição completa</span></div>
<div style="left:12px;top:276px;width:673px;height:46px;background:#ffffff;"></div>
<div style="left:12px;top:276px;width:673px;height:1px;background:#646464;"></div>
<div style="left:12px;top:321px;width:673px;height:1px;background:#646464;"></div>
<div style="left:12px;top:276px;width:1px;height:46px;background:#646464;"></div>
<div style="left:684px;top:276px;width:1px;height:46px;background:#646464;"></div>
<div class="t" style="left:16px;top:278.19px;width:585px;text-align:left;color:#000;font-size:11px;"><span style="transform:scaleX(0.9012);transform-origin:0 0">REMUNERACAO DE SERVICOS DE ADVOCACIA</span></div>
<div style="left:700px;top:265px;width:301px;height:1px;background:#dcdcdc;"></div>
<div style="left:700px;top:538px;width:301px;height:1px;background:#dcdcdc;"></div>
<div style="left:700px;top:265px;width:1px;height:274px;background:#dcdcdc;"></div>
<div style="left:1000px;top:265px;width:1px;height:274px;background:#dcdcdc;"></div>
<div style="left:707px;top:258px;width:165px;height:12px;background:#f0f0f0;"></div>
<div class="t" style="left:708px;top:258.19px;width:193px;text-align:left;color:#000;font-size:11px;font-weight:bold;"><span style="transform:scaleX(0.9200);transform-origin:0 0">Códigos de Receita Relacionados</span></div>
<div style="left:708px;top:276px;width:285px;height:253px;background:#ffffff;"></div>
<div style="left:709px;top:277px;width:68px;height:17px;background:#f0f0f0;"></div>
<div style="left:709px;top:277px;width:68px;height:1px;background:#ffffff;"></div>
<div style="left:709px;top:277px;width:1px;height:17px;background:#ffffff;"></div>
<div style="left:709px;top:293px;width:68px;height:1px;background:#a0a0a0;"></div>
<div style="left:776px;top:277px;width:1px;height:17px;background:#a0a0a0;"></div>
<div style="left:777px;top:277px;width:1px;height:18px;background:#000000;"></div>
<div style="left:709px;top:294px;width:69px;height:1px;background:#000000;"></div>
<div style="left:778px;top:277px;width:62px;height:17px;background:#f0f0f0;"></div>
<div style="left:778px;top:277px;width:62px;height:1px;background:#ffffff;"></div>
<div style="left:778px;top:277px;width:1px;height:17px;background:#ffffff;"></div>
<div style="left:778px;top:293px;width:62px;height:1px;background:#a0a0a0;"></div>
<div style="left:839px;top:277px;width:1px;height:17px;background:#a0a0a0;"></div>
<div style="left:840px;top:277px;width:1px;height:18px;background:#000000;"></div>
<div style="left:778px;top:294px;width:63px;height:1px;background:#000000;"></div>
<div style="left:841px;top:277px;width:38px;height:17px;background:#f0f0f0;"></div>
<div style="left:841px;top:277px;width:38px;height:1px;background:#ffffff;"></div>
<div style="left:841px;top:277px;width:1px;height:17px;background:#ffffff;"></div>
<div style="left:841px;top:293px;width:38px;height:1px;background:#a0a0a0;"></div>
<div style="left:878px;top:277px;width:1px;height:17px;background:#a0a0a0;"></div>
<div style="left:879px;top:277px;width:1px;height:18px;background:#000000;"></div>
<div style="left:841px;top:294px;width:39px;height:1px;background:#000000;"></div>
<div style="left:880px;top:277px;width:51px;height:17px;background:#f0f0f0;"></div>
<div style="left:880px;top:277px;width:51px;height:1px;background:#ffffff;"></div>
<div style="left:880px;top:277px;width:1px;height:17px;background:#ffffff;"></div>
<div style="left:880px;top:293px;width:51px;height:1px;background:#a0a0a0;"></div>
<div style="left:930px;top:277px;width:1px;height:17px;background:#a0a0a0;"></div>
<div style="left:931px;top:277px;width:1px;height:18px;background:#000000;"></div>
<div style="left:880px;top:294px;width:52px;height:1px;background:#000000;"></div>
<div style="left:932px;top:277px;width:60px;height:17px;background:#f0f0f0;"></div>
<div style="left:932px;top:277px;width:60px;height:1px;background:#ffffff;"></div>
<div style="left:932px;top:277px;width:1px;height:17px;background:#ffffff;"></div>
<div style="left:932px;top:293px;width:60px;height:1px;background:#a0a0a0;"></div>
<div style="left:991px;top:277px;width:1px;height:17px;background:#a0a0a0;"></div>
<div style="left:992px;top:277px;width:1px;height:18px;background:#000000;"></div>
<div style="left:932px;top:294px;width:61px;height:1px;background:#000000;"></div>
<div style="left:709px;top:295px;width:68px;height:17px;background:#ccecff;"></div>
<div style="left:777px;top:295px;width:1px;height:18px;background:#c0c0c0;"></div>
<div style="left:709px;top:312px;width:69px;height:1px;background:#c0c0c0;"></div>
<div style="left:778px;top:295px;width:62px;height:17px;background:#ccecff;"></div>
<div style="left:840px;top:295px;width:1px;height:18px;background:#c0c0c0;"></div>
<div style="left:778px;top:312px;width:63px;height:1px;background:#c0c0c0;"></div>
<div style="left:841px;top:295px;width:38px;height:17px;background:#ccecff;"></div>
<div style="left:879px;top:295px;width:1px;height:18px;background:#c0c0c0;"></div>
<div style="left:841px;top:312px;width:39px;height:1px;background:#c0c0c0;"></div>
<div style="left:880px;top:295px;width:51px;height:17px;background:#ccecff;"></div>
<div style="left:931px;top:295px;width:1px;height:18px;background:#c0c0c0;"></div>
<div style="left:880px;top:312px;width:52px;height:1px;background:#c0c0c0;"></div>
<div style="left:932px;top:295px;width:60px;height:17px;background:#ccecff;"></div>
<div style="left:992px;top:295px;width:1px;height:18px;background:#c0c0c0;"></div>
<div style="left:932px;top:312px;width:61px;height:1px;background:#c0c0c0;"></div>
<div style="left:709px;top:313px;width:68px;height:17px;background:#ccecff;"></div>
<div style="left:777px;top:313px;width:1px;height:18px;background:#c0c0c0;"></div>
<div style="left:709px;top:330px;width:69px;height:1px;background:#c0c0c0;"></div>
<div style="left:778px;top:313px;width:62px;height:17px;background:#ccecff;"></div>
<div style="left:840px;top:313px;width:1px;height:18px;background:#c0c0c0;"></div>
<div style="left:778px;top:330px;width:63px;height:1px;background:#c0c0c0;"></div>
<div style="left:841px;top:313px;width:38px;height:17px;background:#ccecff;"></div>
<div style="left:879px;top:313px;width:1px;height:18px;background:#c0c0c0;"></div>
<div style="left:841px;top:330px;width:39px;height:1px;background:#c0c0c0;"></div>
<div style="left:880px;top:313px;width:51px;height:17px;background:#ccecff;"></div>
<div style="left:931px;top:313px;width:1px;height:18px;background:#c0c0c0;"></div>
<div style="left:880px;top:330px;width:52px;height:1px;background:#c0c0c0;"></div>
<div style="left:932px;top:313px;width:60px;height:17px;background:#ccecff;"></div>
<div style="left:992px;top:313px;width:1px;height:18px;background:#c0c0c0;"></div>
<div style="left:932px;top:330px;width:61px;height:1px;background:#c0c0c0;"></div>
<div style="left:709px;top:331px;width:68px;height:17px;background:#ccecff;"></div>
<div style="left:777px;top:331px;width:1px;height:18px;background:#c0c0c0;"></div>
<div style="left:709px;top:348px;width:69px;height:1px;background:#c0c0c0;"></div>
<div style="left:778px;top:331px;width:62px;height:17px;background:#ccecff;"></div>
<div style="left:840px;top:331px;width:1px;height:18px;background:#c0c0c0;"></div>
<div style="left:778px;top:348px;width:63px;height:1px;background:#c0c0c0;"></div>
<div style="left:841px;top:331px;width:38px;height:17px;background:#ccecff;"></div>
<div style="left:879px;top:331px;width:1px;height:18px;background:#c0c0c0;"></div>
<div style="left:841px;top:348px;width:39px;height:1px;background:#c0c0c0;"></div>
<div style="left:880px;top:331px;width:51px;height:17px;background:#ccecff;"></div>
<div style="left:931px;top:331px;width:1px;height:18px;background:#c0c0c0;"></div>
<div style="left:880px;top:348px;width:52px;height:1px;background:#c0c0c0;"></div>
<div style="left:932px;top:331px;width:60px;height:17px;background:#ccecff;"></div>
<div style="left:992px;top:331px;width:1px;height:18px;background:#c0c0c0;"></div>
<div style="left:932px;top:348px;width:61px;height:1px;background:#c0c0c0;"></div>
<div style="left:709px;top:349px;width:68px;height:17px;background:#ccecff;"></div>
<div style="left:777px;top:349px;width:1px;height:18px;background:#c0c0c0;"></div>
<div style="left:709px;top:366px;width:69px;height:1px;background:#c0c0c0;"></div>
<div style="left:778px;top:349px;width:62px;height:17px;background:#ccecff;"></div>
<div style="left:840px;top:349px;width:1px;height:18px;background:#c0c0c0;"></div>
<div style="left:778px;top:366px;width:63px;height:1px;background:#c0c0c0;"></div>
<div style="left:841px;top:349px;width:38px;height:17px;background:#ccecff;"></div>
<div style="left:879px;top:349px;width:1px;height:18px;background:#c0c0c0;"></div>
<div style="left:841px;top:366px;width:39px;height:1px;background:#c0c0c0;"></div>
<div style="left:880px;top:349px;width:51px;height:17px;background:#ccecff;"></div>
<div style="left:931px;top:349px;width:1px;height:18px;background:#c0c0c0;"></div>
<div style="left:880px;top:366px;width:52px;height:1px;background:#c0c0c0;"></div>
<div style="left:932px;top:349px;width:60px;height:17px;background:#ccecff;"></div>
<div style="left:992px;top:349px;width:1px;height:18px;background:#c0c0c0;"></div>
<div style="left:932px;top:366px;width:61px;height:1px;background:#c0c0c0;"></div>
<div style="left:709px;top:367px;width:68px;height:17px;background:#ccecff;"></div>
<div style="left:777px;top:367px;width:1px;height:18px;background:#c0c0c0;"></div>
<div style="left:709px;top:384px;width:69px;height:1px;background:#c0c0c0;"></div>
<div style="left:778px;top:367px;width:62px;height:17px;background:#ccecff;"></div>
<div style="left:840px;top:367px;width:1px;height:18px;background:#c0c0c0;"></div>
<div style="left:778px;top:384px;width:63px;height:1px;background:#c0c0c0;"></div>
<div style="left:841px;top:367px;width:38px;height:17px;background:#ccecff;"></div>
<div style="left:879px;top:367px;width:1px;height:18px;background:#c0c0c0;"></div>
<div style="left:841px;top:384px;width:39px;height:1px;background:#c0c0c0;"></div>
<div style="left:880px;top:367px;width:51px;height:17px;background:#ccecff;"></div>
<div style="left:931px;top:367px;width:1px;height:18px;background:#c0c0c0;"></div>
<div style="left:880px;top:384px;width:52px;height:1px;background:#c0c0c0;"></div>
<div style="left:932px;top:367px;width:60px;height:17px;background:#ccecff;"></div>
<div style="left:992px;top:367px;width:1px;height:18px;background:#c0c0c0;"></div>
<div style="left:932px;top:384px;width:61px;height:1px;background:#c0c0c0;"></div>
<div style="left:708px;top:276px;width:285px;height:1px;background:#646464;"></div>
<div style="left:708px;top:528px;width:285px;height:1px;background:#646464;"></div>
<div style="left:708px;top:276px;width:1px;height:253px;background:#646464;"></div>
<div style="left:992px;top:276px;width:1px;height:253px;background:#646464;"></div>
<div class="t" style="left:709px;top:279.19px;width:68px;text-align:left;color:#000;font-size:11px;padding-left:2px;box-sizing:border-box;"><span style="transform:scaleX(0.9660);transform-origin:0 0">Cód.Receita</span></div>
<div class="t" style="left:777px;top:279.19px;width:62px;text-align:center;color:#000;font-size:11px;"><span style="transform:scaleX(0.9800);transform-origin:50% 0">Tributo</span></div>
<div class="t" style="left:840px;top:279.19px;width:38px;text-align:center;color:#000;font-size:11px;"><span style="transform:scaleX(0.9259);transform-origin:50% 0">EX.</span></div>
<div class="t" style="left:879px;top:279.19px;width:51px;text-align:center;color:#000;font-size:11px;"><span style="transform:scaleX(0.9686);transform-origin:50% 0">Ind.Cl.85</span></div>
<div class="t" style="left:931px;top:279.19px;width:60px;text-align:center;color:#000;font-size:11px;"><span style="transform:scaleX(0.9688);transform-origin:50% 0">Período</span></div>
<div class="t" style="left:709px;top:297.19px;width:68px;text-align:right;color:#000;font-size:11px;padding-right:3px;box-sizing:border-box;"><span style="transform:scaleX(0.9700);transform-origin:100% 0">170806</span></div>
<div class="t" style="left:777px;top:297.19px;width:62px;text-align:center;color:#000;font-size:11px;"><span style="transform:scaleX(0.9000);transform-origin:50% 0">IRPJ</span></div>
<div class="t" style="left:840px;top:297.19px;width:38px;text-align:center;color:#000;font-size:11px;"><span style="transform:scaleX(0.9000);transform-origin:50% 0">NAO</span></div>
<div class="t" style="left:879px;top:297.19px;width:51px;text-align:center;color:#000;font-size:11px;"><span style="transform:scaleX(0.9817);transform-origin:50% 0">N/A</span></div>
<div class="t" style="left:931px;top:297.19px;width:60px;text-align:center;color:#000;font-size:11px;"><span style="transform:scaleX(0.9000);transform-origin:50% 0">MENSAL</span></div>
<div class="t" style="left:709px;top:315.19px;width:68px;text-align:right;color:#000;font-size:11px;padding-right:3px;box-sizing:border-box;"><span style="transform:scaleX(0.9700);transform-origin:100% 0">595207</span></div>
<div class="t" style="left:777px;top:315.19px;width:62px;text-align:center;color:#000;font-size:11px;"><span style="transform:scaleX(0.9000);transform-origin:50% 0">AGREGADO</span></div>
<div class="t" style="left:840px;top:315.19px;width:38px;text-align:center;color:#000;font-size:11px;"><span style="transform:scaleX(0.9000);transform-origin:50% 0">NAO</span></div>
<div class="t" style="left:879px;top:315.19px;width:51px;text-align:center;color:#000;font-size:11px;"><span style="transform:scaleX(0.9817);transform-origin:50% 0">N/A</span></div>
<div class="t" style="left:931px;top:315.19px;width:60px;text-align:center;color:#000;font-size:11px;"><span style="transform:scaleX(0.9000);transform-origin:50% 0">MENSAL</span></div>
<div class="t" style="left:709px;top:333.19px;width:68px;text-align:right;color:#000;font-size:11px;padding-right:3px;box-sizing:border-box;"><span style="transform:scaleX(0.9700);transform-origin:100% 0">596007</span></div>
<div class="t" style="left:777px;top:333.19px;width:62px;text-align:center;color:#000;font-size:11px;"><span style="transform:scaleX(0.9000);transform-origin:50% 0">COFINS</span></div>
<div class="t" style="left:840px;top:333.19px;width:38px;text-align:center;color:#000;font-size:11px;"><span style="transform:scaleX(0.9000);transform-origin:50% 0">NAO</span></div>
<div class="t" style="left:879px;top:333.19px;width:51px;text-align:center;color:#000;font-size:11px;"><span style="transform:scaleX(0.9817);transform-origin:50% 0">N/A</span></div>
<div class="t" style="left:931px;top:333.19px;width:60px;text-align:center;color:#000;font-size:11px;"><span style="transform:scaleX(0.9000);transform-origin:50% 0">MENSAL</span></div>
<div class="t" style="left:709px;top:351.19px;width:68px;text-align:right;color:#000;font-size:11px;padding-right:3px;box-sizing:border-box;"><span style="transform:scaleX(0.9700);transform-origin:100% 0">597907</span></div>
<div class="t" style="left:777px;top:351.19px;width:62px;text-align:center;color:#000;font-size:11px;"><span style="transform:scaleX(0.9394);transform-origin:50% 0">PIS/PASEP</span></div>
<div class="t" style="left:840px;top:351.19px;width:38px;text-align:center;color:#000;font-size:11px;"><span style="transform:scaleX(0.9000);transform-origin:50% 0">NAO</span></div>
<div class="t" style="left:879px;top:351.19px;width:51px;text-align:center;color:#000;font-size:11px;"><span style="transform:scaleX(0.9817);transform-origin:50% 0">N/A</span></div>
<div class="t" style="left:931px;top:351.19px;width:60px;text-align:center;color:#000;font-size:11px;"><span style="transform:scaleX(0.9000);transform-origin:50% 0">MENSAL</span></div>
<div class="t" style="left:709px;top:369.19px;width:68px;text-align:right;color:#000;font-size:11px;padding-right:3px;box-sizing:border-box;"><span style="transform:scaleX(0.9700);transform-origin:100% 0">598707</span></div>
<div class="t" style="left:777px;top:369.19px;width:62px;text-align:center;color:#000;font-size:11px;"><span style="transform:scaleX(0.9000);transform-origin:50% 0">CSLL</span></div>
<div class="t" style="left:840px;top:369.19px;width:38px;text-align:center;color:#000;font-size:11px;"><span style="transform:scaleX(0.9000);transform-origin:50% 0">NAO</span></div>
<div class="t" style="left:879px;top:369.19px;width:51px;text-align:center;color:#000;font-size:11px;"><span style="transform:scaleX(0.9817);transform-origin:50% 0">N/A</span></div>
<div class="t" style="left:931px;top:369.19px;width:60px;text-align:center;color:#000;font-size:11px;"><span style="transform:scaleX(0.9000);transform-origin:50% 0">MENSAL</span></div>
<div style="left:4px;top:345px;width:689px;height:1px;background:#dcdcdc;"></div>
<div style="left:4px;top:434px;width:689px;height:1px;background:#dcdcdc;"></div>
<div style="left:4px;top:345px;width:1px;height:90px;background:#dcdcdc;"></div>
<div style="left:692px;top:345px;width:1px;height:90px;background:#dcdcdc;"></div>
<div style="left:11px;top:338px;width:156px;height:12px;background:#f0f0f0;"></div>
<div class="t" style="left:12px;top:338.19px;width:389px;text-align:left;color:#000;font-size:11px;font-weight:bold;"><span style="transform:scaleX(0.9279);transform-origin:0 0">Indicativos do Tipo de Dedução</span></div>
<div style="left:12px;top:356px;width:673px;height:73px;background:#f7f7f7;"></div>
<div style="left:13px;top:357px;width:31px;height:17px;background:#f0f0f0;"></div>
<div style="left:13px;top:357px;width:31px;height:1px;background:#ffffff;"></div>
<div style="left:13px;top:357px;width:1px;height:17px;background:#ffffff;"></div>
<div style="left:13px;top:373px;width:31px;height:1px;background:#a0a0a0;"></div>
<div style="left:43px;top:357px;width:1px;height:17px;background:#a0a0a0;"></div>
<div style="left:44px;top:357px;width:1px;height:18px;background:#000000;"></div>
<div style="left:13px;top:374px;width:32px;height:1px;background:#000000;"></div>
<div style="left:45px;top:357px;width:621px;height:17px;background:#f0f0f0;"></div>
<div style="left:45px;top:357px;width:621px;height:1px;background:#ffffff;"></div>
<div style="left:45px;top:357px;width:1px;height:17px;background:#ffffff;"></div>
<div style="left:45px;top:373px;width:621px;height:1px;background:#a0a0a0;"></div>
<div style="left:665px;top:357px;width:1px;height:17px;background:#a0a0a0;"></div>
<div style="left:666px;top:357px;width:1px;height:18px;background:#000000;"></div>
<div style="left:45px;top:374px;width:622px;height:1px;background:#000000;"></div>
<div style="left:13px;top:375px;width:31px;height:17px;background:#f7f7f7;"></div>
<div style="left:44px;top:375px;width:1px;height:18px;background:#c0c0c0;"></div>
<div style="left:13px;top:392px;width:32px;height:1px;background:#c0c0c0;"></div>
<div style="left:45px;top:375px;width:621px;height:17px;background:#f7f7f7;"></div>
<div style="left:666px;top:375px;width:1px;height:18px;background:#c0c0c0;"></div>
<div style="left:45px;top:392px;width:622px;height:1px;background:#c0c0c0;"></div>
<div style="left:12px;top:356px;width:673px;height:1px;background:#646464;"></div>
<div style="left:12px;top:428px;width:673px;height:1px;background:#646464;"></div>
<div style="left:12px;top:356px;width:1px;height:73px;background:#646464;"></div>
<div style="left:684px;top:356px;width:1px;height:73px;background:#646464;"></div>
<div style="left:667px;top:357px;width:17px;height:71px;background:#f0f0f0;"></div>
<div style="left:667px;top:357px;width:1px;height:71px;background:#ffffff;"></div>
<div style="left:675px;top:374px;width:2px;height:17px;background:#8a8a8a;"></div>
<div class="t" style="left:13px;top:359.19px;width:31px;text-align:left;color:#000;font-size:11px;padding-left:3px;box-sizing:border-box;"><span style="transform:scaleX(0.9645);transform-origin:0 0">Cód.</span></div>
<div class="t" style="left:45px;top:359.19px;width:621px;text-align:left;color:#000;font-size:11px;padding-left:1px;box-sizing:border-box;"><span style="transform:scaleX(0.9712);transform-origin:0 0">Descrição</span></div>
<div style="left:4px;top:449px;width:689px;height:1px;background:#dcdcdc;"></div>
<div style="left:4px;top:538px;width:689px;height:1px;background:#dcdcdc;"></div>
<div style="left:4px;top:449px;width:1px;height:90px;background:#dcdcdc;"></div>
<div style="left:692px;top:449px;width:1px;height:90px;background:#dcdcdc;"></div>
<div style="left:11px;top:442px;width:153px;height:12px;background:#f0f0f0;"></div>
<div class="t" style="left:12px;top:442.19px;width:389px;text-align:left;color:#000;font-size:11px;font-weight:bold;"><span style="transform:scaleX(0.9410);transform-origin:0 0">Indicativos do Tipo de Isenção</span></div>
<div style="left:12px;top:460px;width:673px;height:73px;background:#f7f7f7;"></div>
<div style="left:13px;top:461px;width:31px;height:17px;background:#f0f0f0;"></div>
<div style="left:13px;top:461px;width:31px;height:1px;background:#ffffff;"></div>
<div style="left:13px;top:461px;width:1px;height:17px;background:#ffffff;"></div>
<div style="left:13px;top:477px;width:31px;height:1px;background:#a0a0a0;"></div>
<div style="left:43px;top:461px;width:1px;height:17px;background:#a0a0a0;"></div>
<div style="left:44px;top:461px;width:1px;height:18px;background:#000000;"></div>
<div style="left:13px;top:478px;width:32px;height:1px;background:#000000;"></div>
<div style="left:45px;top:461px;width:621px;height:17px;background:#f0f0f0;"></div>
<div style="left:45px;top:461px;width:621px;height:1px;background:#ffffff;"></div>
<div style="left:45px;top:461px;width:1px;height:17px;background:#ffffff;"></div>
<div style="left:45px;top:477px;width:621px;height:1px;background:#a0a0a0;"></div>
<div style="left:665px;top:461px;width:1px;height:17px;background:#a0a0a0;"></div>
<div style="left:666px;top:461px;width:1px;height:18px;background:#000000;"></div>
<div style="left:45px;top:478px;width:622px;height:1px;background:#000000;"></div>
<div style="left:13px;top:479px;width:31px;height:17px;background:#f7f7f7;"></div>
<div style="left:44px;top:479px;width:1px;height:18px;background:#c0c0c0;"></div>
<div style="left:13px;top:496px;width:32px;height:1px;background:#c0c0c0;"></div>
<div style="left:45px;top:479px;width:621px;height:17px;background:#f7f7f7;"></div>
<div style="left:666px;top:479px;width:1px;height:18px;background:#c0c0c0;"></div>
<div style="left:45px;top:496px;width:622px;height:1px;background:#c0c0c0;"></div>
<div style="left:12px;top:460px;width:673px;height:1px;background:#646464;"></div>
<div style="left:12px;top:532px;width:673px;height:1px;background:#646464;"></div>
<div style="left:12px;top:460px;width:1px;height:73px;background:#646464;"></div>
<div style="left:684px;top:460px;width:1px;height:73px;background:#646464;"></div>
<div style="left:667px;top:461px;width:17px;height:71px;background:#f0f0f0;"></div>
<div style="left:667px;top:461px;width:1px;height:71px;background:#ffffff;"></div>
<div style="left:675px;top:478px;width:2px;height:17px;background:#8a8a8a;"></div>
<div class="t" style="left:13px;top:463.19px;width:31px;text-align:left;color:#000;font-size:11px;padding-left:3px;box-sizing:border-box;"><span style="transform:scaleX(0.9645);transform-origin:0 0">Cód.</span></div>
<div class="t" style="left:45px;top:463.19px;width:621px;text-align:left;color:#000;font-size:11px;padding-left:1px;box-sizing:border-box;"><span style="transform:scaleX(0.9712);transform-origin:0 0">Descrição</span></div>
<div style="left:0px;top:555px;width:1010px;height:1px;background:#ffffff;"></div>
<div style="left:0px;top:558px;width:1009px;height:1px;background:#a0a0a0;"></div>
<div style="left:0px;top:559px;width:1010px;height:2px;background:#f7f7f7;"></div>
<svg style="position:absolute;left:0;top:0" width="1010" height="561"><line x1="34" y1="54" x2="89.9" y2="84.5" stroke="#ff0000" stroke-width="3" stroke-linecap="round"/><path d="M100 90 L85.3 88.8 L91.0 78.3 Z" fill="#ff0000"/><line x1="876" y1="65" x2="927.6" y2="101.4" stroke="#ff0000" stroke-width="3" stroke-linecap="round"/><path d="M937 108 L922.5 105.1 L929.4 95.3 Z" fill="#ff0000"/><line x1="656" y1="279" x2="710.5" y2="321.9" stroke="#ff0000" stroke-width="3" stroke-linecap="round"/><path d="M719.5 329 L705.2 325.4 L712.6 315.9 Z" fill="#ff0000"/></svg>
</body></html>
